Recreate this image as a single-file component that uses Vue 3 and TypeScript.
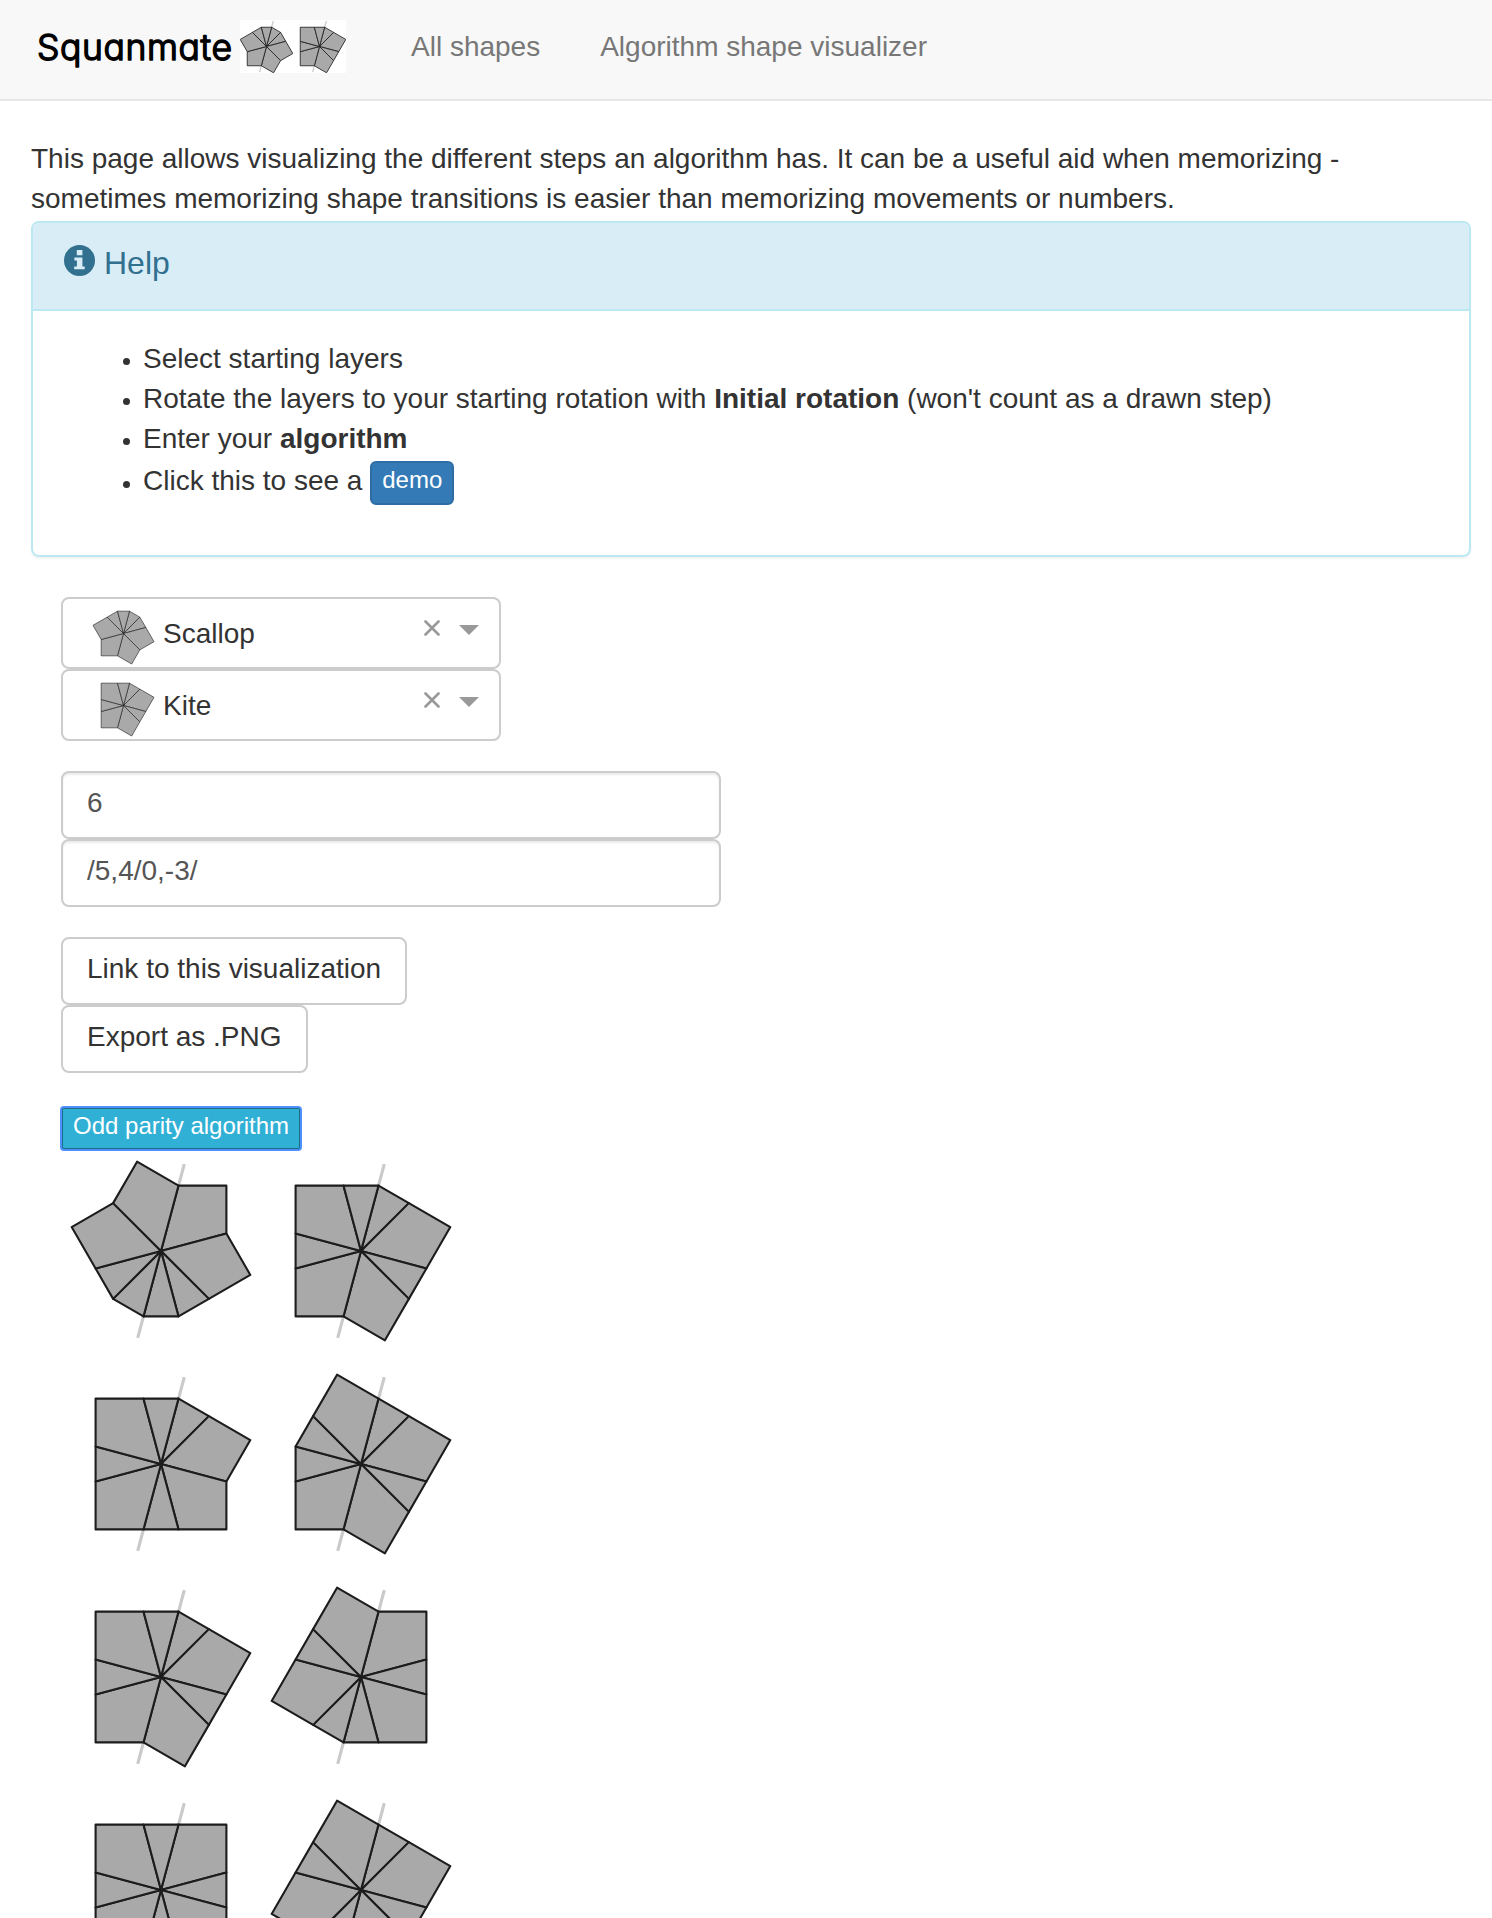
<script setup lang="ts">
import { defineComponent, h, ref } from 'vue'

/* Half the side of a square layer, in drawing units. */
const HALF = 65.4
const EDGE_RADIUS = HALF / Math.cos(Math.PI / 12)
const CORNER_RADIUS = HALF * Math.SQRT2

type Point = [number, number]

function polar(angle: number, radius: number): Point {
  const a = (angle * Math.PI) / 180
  return [+(Math.sin(a) * radius).toFixed(2), +(-Math.cos(a) * radius).toFixed(2)]
}

/* Pieces run clockwise from the slice line: "c" is a corner (60 deg), "e" an edge (30 deg). */
function piecePaths(pieces: string): string[] {
  let angle = 15
  return [...pieces].map((kind) => {
    const span = kind === 'c' ? 60 : 30
    const pts: Point[] = [[0, 0], polar(angle, EDGE_RADIUS)]
    if (kind === 'c') pts.push(polar(angle + 30, CORNER_RADIUS))
    pts.push(polar(angle + span, EDGE_RADIUS))
    angle += span
    return pts.map((p) => p.join(',')).join(' ')
  })
}

const LayerShape = defineComponent({
  props: {
    pieces: { type: String, required: true },
    extent: { type: Number, default: 200 },
    line: { type: Number, default: 2.1 },
    axis: { type: Boolean, default: true },
  },
  setup(props) {
    return () => {
      const e = props.extent
      const [x, y] = polar(15, 90)
      return h('svg', { viewBox: `${-e / 2} ${-e / 2} ${e} ${e}` }, [
        props.axis
          ? h('line', { x1: x, y1: y, x2: -x, y2: -y, stroke: '#cacaca', 'stroke-width': props.line * 1.5 })
          : null,
        ...piecePaths(props.pieces).map((points) =>
          h('polygon', { points, fill: '#a9a9a9', stroke: '#1c1c1c', 'stroke-width': props.line, 'stroke-linejoin': 'round' }),
        ),
      ])
    }
  },
})

const SCALLOP = 'eeccccee'
const KITE = 'ececcece'

const selections = [
  { name: 'Scallop', pieces: SCALLOP },
  { name: 'Kite', pieces: KITE },
]

const initialRotation = ref('6')
const algorithm = ref('/5,4/0,-3/')

const steps = [
  ['cceeeecc', KITE],
  ['eccecece', 'ececceec'],
  [KITE, 'ceceecec'],
  ['cececece', 'ecec' + 'ecec'],
]
</script>

<template>
  <div class="page">
    <nav class="navbar">
      <a class="brand">
        <svg class="brand-name" viewBox="0 0 205 99">
          <text x="2" y="60" textLength="195" lengthAdjust="spacing">Squanmate</text>
        </svg>
        <span class="brand-shapes">
          <LayerShape :pieces="SCALLOP" :extent="180" :line="2.8" />
          <LayerShape :pieces="KITE" :extent="180" :line="2.8" />
        </span>
      </a>
      <a class="nav-link">All shapes</a>
      <a class="nav-link">Algorithm shape visualizer</a>
    </nav>

    <main class="content">
      <p class="intro">
        This page allows visualizing the different steps an algorithm has. It can be a useful aid when memorizing -
        sometimes memorizing shape transitions is easier than memorizing movements or numbers.
      </p>

      <section class="panel">
        <header class="panel-heading">
          <svg class="info-icon" viewBox="0 0 31 31">
            <circle cx="15.5" cy="15.5" r="15.5" />
            <path d="M12.8 5h5.6v5.2h-5.6z M10.4 12.6h8v8.8h2.3v2.8H10.2v-2.8h2.7v-6h-2.5z" />
          </svg>
          <span>Help</span>
        </header>
        <div class="panel-body">
          <ul>
            <li>Select starting layers</li>
            <li>Rotate the layers to your starting rotation with <b>Initial rotation</b> (won't count as a drawn step)</li>
            <li>Enter your <b>algorithm</b></li>
            <li class="demo-item">Click this to see a <button class="demo">demo</button></li>
          </ul>
        </div>
      </section>

      <div class="form">
        <div class="selects">
          <div v-for="s in selections" :key="s.name" class="select">
            <LayerShape class="select-shape" :pieces="s.pieces" :extent="161" :line="1.8" :axis="false" />
            <span class="select-label">{{ s.name }}</span>
            <svg class="clear" viewBox="0 0 16 16"><path d="M1.5 1.5 14.5 14.5M14.5 1.5 1.5 14.5" /></svg>
            <svg class="arrow" viewBox="0 0 20 10"><path d="M0 0H20L10 10Z" /></svg>
          </div>
        </div>

        <div class="inputs">
          <input v-model="initialRotation" type="text" />
          <input v-model="algorithm" type="text" />
        </div>

        <div class="actions">
          <button class="btn">Link to this visualization</button>
          <button class="btn">Export as .PNG</button>
        </div>

        <button class="parity">Odd parity algorithm</button>

        <div class="steps">
          <div v-for="(step, i) in steps" :key="i" class="step">
            <LayerShape v-for="(layer, j) in step" :key="j" class="step-shape" :pieces="layer" />
          </div>
        </div>
      </div>
    </main>
  </div>
</template>

<style>
body {
  background: #fff;
}
</style>

<style scoped>
.page {
  height: 100vh;
  overflow: hidden;
  box-sizing: border-box;
  font-family: "Liberation Sans", Arial, sans-serif;
  font-size: 28px;
  line-height: 40px;
  color: #333;
}
.page * {
  box-sizing: border-box;
}
.navbar {
  display: flex;
  height: 101px;
  padding-left: 35px;
  background: #f8f8f8;
  border-bottom: 2px solid #e7e7e7;
}
.brand {
  display: flex;
  width: 346px;
}
.brand-name {
  width: 205px;
  height: 99px;
}
.brand-name text {
  font-family: Inter, sans-serif;
  font-size: 35.5px;
  font-weight: 300;
  font-feature-settings: "cv11";
  fill: #000;
  stroke: #000;
  stroke-width: 1.5px;
  stroke-linejoin: round;
}
.brand-shapes {
  display: flex;
  width: 106px;
  height: 53px;
  margin-top: 20px;
  background: #fff;
}
.brand-shapes svg {
  width: 53px;
  height: 53px;
}
.nav-link {
  padding: 27px 30px 0;
  color: #777;
  white-space: nowrap;
}
.content {
  padding: 38px 21px 0 31px;
}
.intro {
  margin: 0 0 2px;
  width: 1400px;
}
.panel {
  height: 336px;
  border: 2px solid #bce8f1;
  border-radius: 8px;
  box-shadow: 0 2px 2px rgba(0, 0, 0, 0.05);
}
.panel-heading {
  display: flex;
  height: 88px;
  padding: 20px 30px;
  background: #d9edf7;
  border-bottom: 2px solid #bce8f1;
  border-radius: 6px 6px 0 0;
  color: #31708f;
  font-size: 32px;
}
.info-icon {
  width: 31px;
  height: 31px;
  margin: 1.5px 9.5px 0 0.5px;
}
.info-icon circle {
  fill: #31708f;
}
.info-icon path {
  fill: #d9edf7;
}
.panel-body {
  padding: 28px 30px;
}
.panel-body ul {
  margin: 0;
  padding-left: 60px;
  list-style: none;
}
.panel-body li::before {
  content: "";
  display: inline-block;
  width: 7px;
  height: 7px;
  margin-right: 13px;
  border-radius: 50%;
  background: #333;
  vertical-align: 3px;
}
.panel-body .demo-item::before {
  vertical-align: 2px;
}
.demo-item {
  height: 46px;
  line-height: 44px;
}
.demo {
  height: 44px;
  padding: 0 10px 6px;
  border: 2px solid #2e6da4;
  border-radius: 6px;
  background: #337ab7;
  color: #fff;
  font: 24px/34px "Liberation Sans", Arial, sans-serif;
  vertical-align: middle;
}
.form {
  padding: 40px 30px 0;
}
.select {
  display: flex;
  width: 440px;
  height: 72px;
  border: 2px solid #ccc;
  border-radius: 8px;
}
.select-shape {
  width: 55px;
  height: 55px;
  margin: 7px 0 0 33px;
  overflow: visible;
}
.select-label {
  flex: 1;
  margin: 15px 0 0 12px;
}
.clear {
  width: 16px;
  height: 16px;
  margin: 21px 19px 0 0;
  fill: none;
  stroke: #999;
  stroke-width: 2.6;
  stroke-linecap: round;
}
.arrow {
  width: 20px;
  height: 10px;
  margin: 26px 20px 0 0;
  fill: #999;
}
.inputs {
  display: flex;
  flex-direction: column;
  margin-top: 30px;
}
.inputs input {
  width: 660px;
  height: 68px;
  padding: 0 24px 4px;
  border: 2px solid #ccc;
  border-radius: 8px;
  background: #fff;
  box-shadow: inset 0 2px 2px rgba(0, 0, 0, 0.075);
  color: #555;
  font: 28px/40px "Liberation Sans", Arial, sans-serif;
}
.actions {
  display: flex;
  flex-direction: column;
  align-items: flex-start;
  margin-top: 30px;
}
.btn {
  height: 68px;
  padding: 0 24px 5px;
  border: 2px solid #ccc;
  border-radius: 8px;
  background: #fff;
  color: #333;
  font: 28px/40px "Liberation Sans", Arial, sans-serif;
}
.parity {
  display: block;
  height: 43px;
  margin-top: 34px;
  padding: 0 10px 6px;
  border: 2px solid #1b6d85;
  border-radius: 3px;
  outline: 2px solid #4d90fe;
  outline-offset: -1px;
  background: #31b0d5;
  color: #fff;
  font: 24px/33px "Liberation Sans", Arial, sans-serif;
}
.steps {
  margin-top: 1px;
}
.step {
  display: flex;
  height: 213px;
}
.step-shape {
  width: 200px;
  height: 200px;
  overflow: visible;
  filter: blur(0.5px);
}
</style>
